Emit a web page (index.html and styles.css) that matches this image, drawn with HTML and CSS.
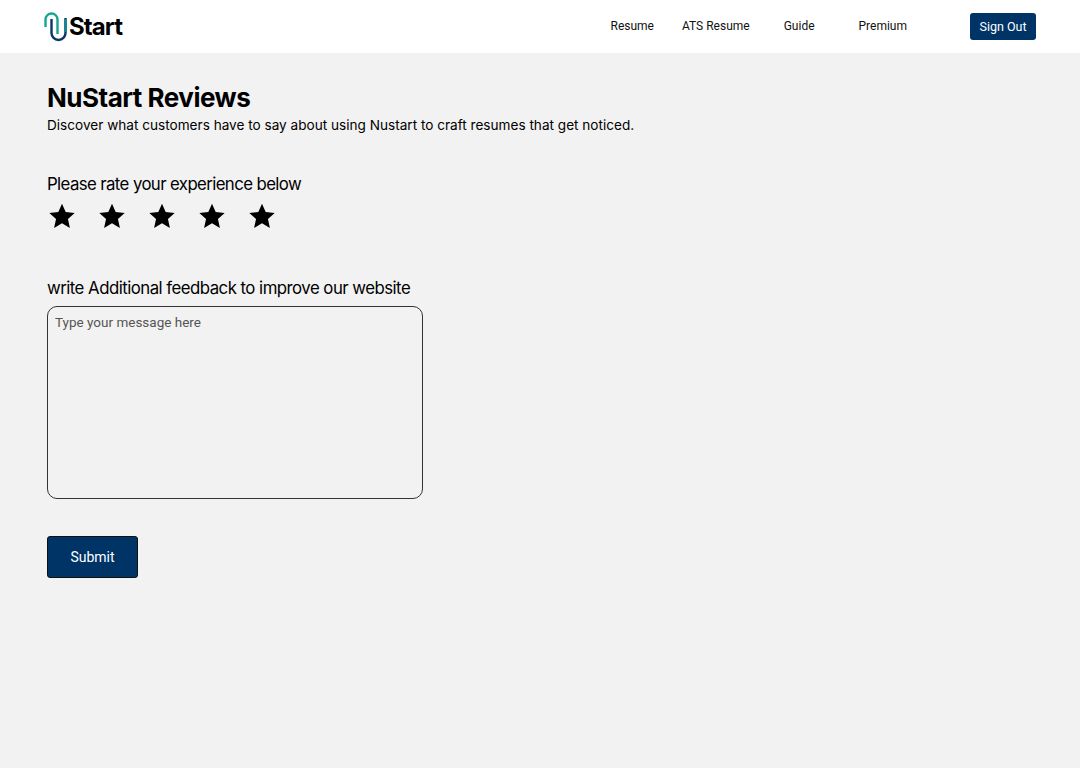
FILE: index.html
```html
<!DOCTYPE html>
<html lang="en">
<head>
  <meta charset="UTF-8">
  <title>NuStart Reviews</title>
  <meta name="viewport" content="width=device-width, initial-scale=1.0">
  <link rel="stylesheet" href="styles.css">
</head>
<body>

<header class="topbar">
  <a class="logo" href="#">
    <svg class="logo-mark" width="26" height="30" viewBox="0 0 26 30" fill="none">
      <path d="M1.5 15V7.5a6 6 0 0 1 12 0V22" stroke="#12a594" stroke-width="2.4"/>
      <path d="M7.5 7V21a7 7 0 0 0 14 0V6" stroke="#0b3568" stroke-width="2.4"/>
      <path d="M21.5 7V20" stroke="#0f8a90" stroke-width="2.4"/>
    </svg>
    <span class="logo-text">Start</span>
  </a>
  <nav class="nav">
    <a class="nav-link nav-resume" href="#">Resume</a>
    <a class="nav-link nav-ats" href="#">ATS Resume</a>
    <a class="nav-link nav-guide" href="#">Guide</a>
    <a class="nav-link nav-premium" href="#">Premium</a>
    <button class="signout">Sign Out</button>
  </nav>
</header>

<main class="content">
  <h1>NuStart Reviews</h1>
  <p class="intro">Discover what customers have to say about using Nustart to craft resumes that get noticed.</p>

  <h2 class="rate-title">Please rate your experience below</h2>
  <div class="stars">
    <svg viewBox="0 0 24 24" width="26" height="26"><path d="M12 .8l3.4 7.6 8.3.9-6.2 5.5 1.8 8.2L12 18.8l-7.3 4.2 1.8-8.2L.3 9.3l8.3-.9z"/></svg>
    <svg viewBox="0 0 24 24" width="26" height="26"><path d="M12 .8l3.4 7.6 8.3.9-6.2 5.5 1.8 8.2L12 18.8l-7.3 4.2 1.8-8.2L.3 9.3l8.3-.9z"/></svg>
    <svg viewBox="0 0 24 24" width="26" height="26"><path d="M12 .8l3.4 7.6 8.3.9-6.2 5.5 1.8 8.2L12 18.8l-7.3 4.2 1.8-8.2L.3 9.3l8.3-.9z"/></svg>
    <svg viewBox="0 0 24 24" width="26" height="26"><path d="M12 .8l3.4 7.6 8.3.9-6.2 5.5 1.8 8.2L12 18.8l-7.3 4.2 1.8-8.2L.3 9.3l8.3-.9z"/></svg>
    <svg viewBox="0 0 24 24" width="26" height="26"><path d="M12 .8l3.4 7.6 8.3.9-6.2 5.5 1.8 8.2L12 18.8l-7.3 4.2 1.8-8.2L.3 9.3l8.3-.9z"/></svg>
  </div>

  <h2 class="feedback-title">write Additional feedback to improve our website</h2>
  <textarea class="message" placeholder="Type your message here"></textarea>

  <button class="submit">Submit</button>
</main>

</body>
</html>
```

FILE: styles.css
```css
* {
  box-sizing: border-box;
}

body {
  font-family: 'Inter', sans-serif;
  margin: 0;
  min-height: 768px;
  background: #f2f2f2;
  color: #000;
}

.topbar {
  display: flex;
  justify-content: space-between;
  align-items: center;
  height: 53px;
  background: #fff;
  padding: 0 44px;
}

.logo {
  display: flex;
  align-items: center;
  color: #000;
  text-decoration: none;
}

.logo-mark {
  display: block;
}

.logo-text {
  font-size: 24px;
  font-weight: 700;
  letter-spacing: -0.9px;
  margin-left: -1px;
}

.nav {
  display: flex;
  align-items: center;
  margin-bottom: 1px;
}

.nav-link {
  font-family: 'Roboto', sans-serif;
  font-size: 12px;
  color: #111;
  text-decoration: none;
}

.nav-resume {
  margin-right: 28px;
}

.nav-ats {
  margin-right: 34px;
}

.nav-guide {
  margin-right: 44px;
}

.nav-premium {
  margin-right: 63px;
}

.signout {
  width: 66px;
  height: 27px;
  padding: 0;
  border: none;
  border-radius: 3px;
  background: #003366;
  color: #fff;
  font-family: 'Roboto', sans-serif;
  font-size: 12.5px;
  font-weight: 400;
  cursor: pointer;
}

.content {
  padding: 28px 47px 0;
}

h1 {
  margin: 0;
  font-size: 26px;
  line-height: 34px;
  font-weight: 700;
  letter-spacing: -0.5px;
}

.intro {
  margin: 0;
  font-size: 13.6px;
  line-height: 20px;
}

h2 {
  margin: 0;
  font-size: 16.8px;
  line-height: 24px;
  font-weight: 400;
  letter-spacing: -0.6px;
}

.rate-title {
  margin-top: 37px;
}

.stars {
  display: flex;
  gap: 24px;
  margin-top: 7px;
  margin-left: 2px;
}

.stars svg {
  display: block;
  fill: #000;
}

.feedback-title {
  margin-top: 47px;
  letter-spacing: -0.52px;
}

.message {
  display: block;
  width: 376px;
  height: 193px;
  margin-top: 6px;
  padding: 6px 7px;
  border: 1px solid #333;
  border-radius: 10px;
  background: transparent;
  font-family: 'Roboto', sans-serif;
  font-size: 13.5px;
  line-height: 18px;
  resize: none;
}

.message::placeholder {
  color: #555;
}

.submit {
  display: block;
  width: 91px;
  height: 42px;
  margin-top: 37px;
  padding: 0;
  border: 1px solid #111;
  border-radius: 3px;
  background: #003366;
  color: #fff;
  font-family: 'Roboto', sans-serif;
  font-size: 14px;
  font-weight: 400;
  cursor: pointer;
}
```
